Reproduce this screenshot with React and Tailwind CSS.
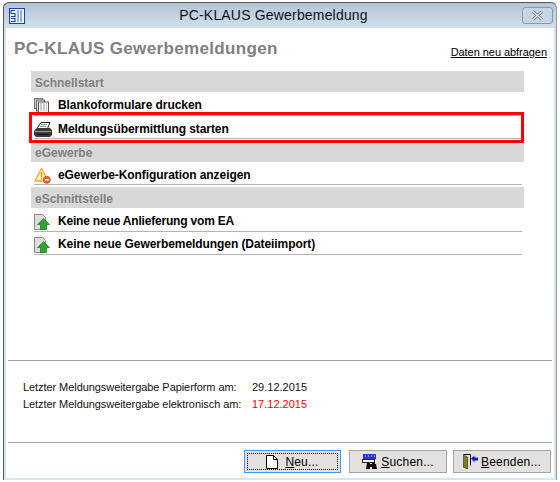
import React from 'react';

const AppIcon = () => (
  <svg width="16" height="16" viewBox="0 0 16 16" className="shrink-0">
    <rect x="0.5" y="0.5" width="15" height="15" fill="#eaf2fb" stroke="#1c3fa8" />
    <path d="M2 2.5h4M2 2.5v3h4v3H2M2 10.5h4v3H2" fill="none" stroke="#1c3fa8" strokeWidth="1.1" />
    <path d="M8 3h6M8 5h6M8 7h6M8 9h6M8 11h6M8 13h6" stroke="#3a6fc4" strokeDasharray="2 1" />
  </svg>
);

const FormsIcon = () => (
  <svg width="15" height="15" viewBox="0 0 15 15">
    <rect x="0.5" y="0.5" width="8" height="10" fill="#d4d4d4" stroke="#777" />
    <rect x="2.5" y="2" width="8" height="11" fill="#e6e6e6" stroke="#666" />
    <rect x="4.5" y="4" width="10" height="10.5" fill="#fff" stroke="#555" />
    <path d="M6 6h7M6 8h7M6 10h7M6 12h7" stroke="#999" strokeDasharray="2 1" />
  </svg>
);

const PrinterIcon = () => (
  <svg width="18" height="15" viewBox="0 0 18 15">
    <path d="M7 0.5h9l-2.5 6H3z" fill="#fff" stroke="#222" />
    <path d="M7 2.5h6M6 4.5h6" stroke="#888" />
    <path d="M3 6h13l2 2v5l-2 2H2l-2-2V9z" fill="#3a3a3a" />
    <path d="M1 9.5h16" stroke="#9a9a9a" />
    <rect x="3" y="12" width="12" height="1" fill="#111" />
  </svg>
);

const WarnIcon = () => (
  <svg width="17" height="17" viewBox="0 0 17 17">
    <path d="M7.5 1.2L1 14h13z" fill="#fdf0b8" stroke="#e3ae3c" strokeWidth="1.3" strokeLinejoin="round" />
    <path d="M7.5 5v5M7.5 11v1.6" stroke="#dca63f" strokeWidth="1.7" />
    <circle cx="12.8" cy="12.8" r="3.6" fill="#e2672c" stroke="#b84a18" strokeWidth="0.6" />
    <rect x="10.8" y="12.1" width="4" height="1.4" fill="#fff" />
  </svg>
);

const ImportIcon = () => (
  <svg width="16" height="16" viewBox="0 0 16 16">
    <path d="M0.5 0.5h8l3 3v12h-11z" fill="#dedede" stroke="#8a8a8a" />
    <path d="M9.5 4.5L15.5 10.5H12.5V15.5H6.5V10.5H3.5z" fill="#2fa52f" stroke="#1c7a1c" strokeWidth="0.7" />
  </svg>
);

const PageIcon = () => (
  <svg width="12" height="14" viewBox="0 0 12 14">
    <path d="M0.5 0.5h7l4 4v9h-11z" fill="#fff" stroke="#000" />
    <path d="M7.5 0.5v4h4" fill="none" stroke="#000" />
  </svg>
);

const SearchIcon = () => (
  <svg width="16" height="15" viewBox="0 0 16 15">
    <rect x="1" y="0" width="13" height="5" fill="#2a34d8" />
    <path d="M3 2h1M6 2h1M9 2h1M12 2h1" stroke="#fff" />
    <rect x="0.5" y="5.5" width="12" height="3" fill="#fff" stroke="#222" />
    <path d="M5 9h3v6H4zM10 8h3v2h1l1 5h-5z" fill="#111" />
    <path d="M7 10h4v3H7z" fill="#111" />
  </svg>
);

const DoorIcon = () => (
  <svg width="15" height="15" viewBox="0 0 15 15">
    <path d="M0.5 0.5h7v11" fill="none" stroke="#000" />
    <path d="M0 1l4.5 2v12L0 13z" fill="#808020" stroke="#333" strokeWidth="0.7" />
    <path d="M8 4.5l3.5-3v2H15v3h-3.5v2z" fill="#1a1ad0" />
  </svg>
);

const SectionHeader = ({ title }) => (
  <div className="h-[21px] bg-[#d8d8d8] pl-[4px] pt-[2px] flex items-center text-[12px] font-bold text-[#808080]">
    {title}
  </div>
);

const ActionRow = ({ icon, label, rowClass, spacing = 'tracking-[-0.07px]' }) => (
  <div className={`${rowClass} ml-[3px] mr-[2px] flex items-end border-b border-[#b4b4b4]`}>
    <span className="w-[24px] h-[15px] flex items-center shrink-0">{icon}</span>
    <span className={`${spacing} text-[12px] font-bold text-black leading-[15px] whitespace-nowrap`}>{label}</span>
  </div>
);

const ToolbarButton = ({ icon, mnemonic, rest, width, focused }) => (
  <button className={`${width} h-[23px] shrink-0 bg-[#e3e1df] text-[12px] text-black tracking-[0.2px] border ${focused ? 'border-[#3b99fc] p-[2px]' : 'border-[#a6a6a6]'}`}>
    <span className={`flex items-center justify-center w-full h-full ${focused ? 'gap-[7px] border border-dotted border-black' : 'gap-[3px]'}`}>
      {icon}
      <span><span className="underline">{mnemonic}</span>{rest}</span>
    </span>
  </button>
);

export default function App() {
  return (
    <div className="w-[560px] h-[482px] bg-white pt-[2px] pl-[3px] pr-[3px] pb-[2px] font-['Liberation_Sans',Arial,sans-serif]">
      <div className="h-[478px] flex flex-col rounded-t-[6px] border-t border-l border-[#555] border-r border-r-[#999] bg-gradient-to-b from-[#b4c5d7] via-[#d5e3f0] via-[6%] to-[#d9e6f2]">
        {/* Title bar */}
        <div className="h-[25px] flex items-center shrink-0 relative pl-[5px]">
          <AppIcon />
          <div className="flex-1 text-center text-[14px] text-[#111] tracking-[0.18px] pr-[34px]">PC-KLAUS Gewerbemeldung</div>
          <div className="absolute right-[3px] top-[4px] w-[31px] h-[17px] rounded-[3px] border border-[#8a9aac] bg-[#c6d5e3] flex items-center justify-center">
            <svg width="13" height="11" viewBox="0 0 13 11">
              <path d="M2 1.5l9 8M11 1.5l-9 8" stroke="#6f7a86" strokeWidth="3" />
              <path d="M2 1.5l9 8M11 1.5l-9 8" stroke="#e6edf4" strokeWidth="1.2" />
            </svg>
          </div>
        </div>

        {/* Body */}
        <div className="h-[450px] shrink-0 mx-[2px] bg-white flex flex-col">
          <div className="flex justify-between pl-[8px] pr-[7px] h-[43px] shrink-0">
            <h1 className="text-[17px] font-bold text-[#808080] tracking-[0.35px] pt-[11px] leading-[20px]">PC-KLAUS Gewerbemeldungen</h1>
            <a className="text-[11px] text-black underline tracking-[-0.05px] self-start mt-[17px] leading-[14px]">Daten neu abfragen</a>
          </div>

          <div className="ml-[25px] mr-[30px] flex flex-col relative">
            <SectionHeader title="Schnellstart" />
            <ActionRow icon={<FormsIcon />} label="Blankoformulare drucken" rowClass="h-[24px] pb-[2px]" />
            <ActionRow icon={<PrinterIcon />} label="Meldungsübermittlung starten" rowClass="h-[23px] pb-[1px]" />
            <div className="absolute left-[-2px] right-0 top-[41px] h-[31px] border-[3px] border-[#ff0000] z-10" />
            <div className="h-[2px]" />
            <SectionHeader title="eGewerbe" />
            <ActionRow icon={<WarnIcon />} label="eGewerbe-Konfiguration anzeigen" rowClass="h-[23px] pb-[1px]" />
            <div className="h-[2px]" />
            <SectionHeader title="eSchnittstelle" />
            <ActionRow icon={<ImportIcon />} label="Keine neue Anlieferung vom EA" rowClass="h-[24px] pb-[2px]" spacing="tracking-[-0.19px]" />
            <ActionRow icon={<ImportIcon />} label="Keine neue Gewerbemeldungen (Dateiimport)" rowClass="h-[23px] pb-[2px]" />
          </div>

          <div className="flex-1" />

          <div className="h-[82px] shrink-0 mx-[2px] border-t border-[#a0a0a0] pt-[18px] pl-[15px] text-[11px] text-[#111]">
            <div className="flex h-[17px] items-center whitespace-nowrap">
              <span className="w-[229px] tracking-[-0.07px]">Letzter Meldungsweitergabe Papierform am:</span>
              <span>29.12.2015</span>
            </div>
            <div className="flex h-[17px] items-center whitespace-nowrap">
              <span className="w-[229px] tracking-[-0.07px]">Letzter Meldungsweitergabe elektronisch am:</span>
              <span className="text-[#ff0000]">17.12.2015</span>
            </div>
          </div>

          <div className="h-[36px] shrink-0 mx-[2px] border-t border-[#a0a0a0] flex justify-end items-start pt-[7px] pr-[1px]">
            <ToolbarButton icon={<PageIcon />} mnemonic="N" rest="eu..." width="w-[97px]" focused />
            <div className="w-[8px] shrink-0" />
            <ToolbarButton icon={<SearchIcon />} mnemonic="S" rest="uchen..." width="w-[98px]" />
            <div className="w-[6px] shrink-0" />
            <ToolbarButton icon={<DoorIcon />} mnemonic="B" rest="eenden..." width="w-[98px]" />
          </div>
        </div>
      </div>
    </div>
  );
}
